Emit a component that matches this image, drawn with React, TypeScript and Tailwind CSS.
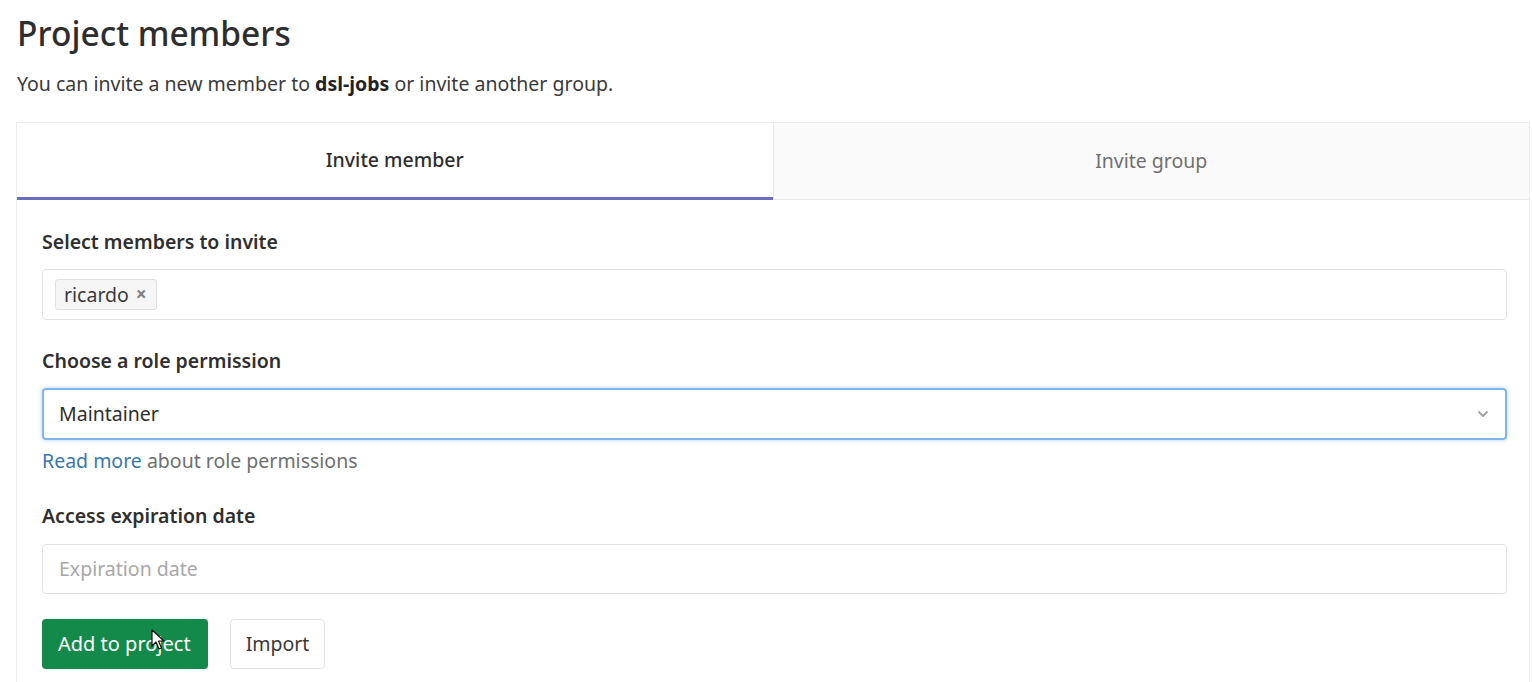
import { ChevronDown } from "lucide-react";

function Label({ children }: { children: React.ReactNode }) {
  return <div className="h-6 leading-6 text-[19.5px] font-semibold text-[#2f2f2f]">{children}</div>;
}

export default function App() {
  return (
    <div className="min-h-screen bg-white pl-[16px] pr-[2px] pt-[11px] font-['Noto_Sans',sans-serif] text-[#2e2e2e]">
      <h1 className="text-[33.5px] leading-[44px] font-medium text-[#2e2e2e] pl-px">Project members</h1>
      <p className="mt-[17px] text-[19.5px] leading-6 text-[#3a3a3a] pl-px">
        You can invite a new member to <span className="font-bold text-[#222]">dsl-jobs</span> or invite another group.
      </p>

      <div className="mt-[26px] border border-[#ececec] border-b-0">
        {/* Tabs */}
        <div className="flex">
          <div className="flex-1 h-[77px] flex items-center justify-center border-b-[3px] border-[#6b6bbf] bg-white text-[19.5px] font-medium text-[#2e2e2e]">
            Invite member
          </div>
          <div className="flex-1 h-[77px] flex items-center justify-center bg-[#fafafa] border-l border-b border-[#e8e8e8] text-[19.5px] text-[#707070]">
            Invite group
          </div>
        </div>

        {/* Form */}
        <div className="pl-[25px] pr-[22px] pt-[30px] pb-[14px]">
          <Label>Select members to invite</Label>
          <div className="mt-[15px] h-[51px] rounded-[4px] border border-[#e3e3e3] flex items-center pl-[12px]">
            <span className="h-[31px] flex items-center gap-[7px] pl-[8px] pr-[9px] rounded-[3px] border border-[#e0e0e0] bg-[#f6f6f6] text-[19.5px] text-[#3a3a3a]">
              ricardo
              <span className="text-[19px] leading-none font-bold text-[#808080]">×</span>
            </span>
          </div>

          <div className="mt-[29px]">
            <Label>Choose a role permission</Label>
          </div>
          <div className="mt-[15px] h-[52px] rounded-[4px] border-2 border-[#7fb6ec] shadow-[0_0_4px_rgba(31,120,209,0.35)] flex items-center justify-between pl-[15px] pr-[14px]">
            <span className="text-[19.5px] text-[#2e2e2e]">Maintainer</span>
            <ChevronDown className="w-[16px] h-[16px] text-[#a0a0a0]" strokeWidth={2.75} />
          </div>
          <div className="mt-[9px] h-6 leading-6 text-[19.5px] text-[#6f6f6f]">
            <span className="text-[#3777b0]">Read more</span> about role permissions
          </div>

          <div className="mt-[31px]">
            <Label>Access expiration date</Label>
          </div>
          <div className="mt-[16px] h-[50px] rounded-[4px] border border-[#e3e3e3] flex items-center pl-[16px] text-[19.5px] text-[#a8a8a8]">
            Expiration date
          </div>

          <div className="mt-[25px] flex gap-[22px]">
            <div className="relative">
              <button className="h-[50px] pl-[16px] pr-[17px] rounded-[4px] bg-[#138a4a] text-white text-[20px]">
                Add to project
              </button>
              <svg className="absolute left-[109px] top-[10px] w-[14px] h-[22px]" viewBox="0 0 14 22">
                <path d="M1 1 L1 17 L5 13 L8 20 L10.5 19 L7.5 12 L13 12 Z" fill="#fff" stroke="#111" strokeWidth="1.2" strokeLinejoin="round" />
              </svg>
            </div>
            <button className="h-[50px] px-[15px] rounded-[4px] bg-white border border-[#e3e3e3] text-[19.5px] text-[#3a3a3a]">
              Import
            </button>
          </div>
        </div>
      </div>
    </div>
  );
}
